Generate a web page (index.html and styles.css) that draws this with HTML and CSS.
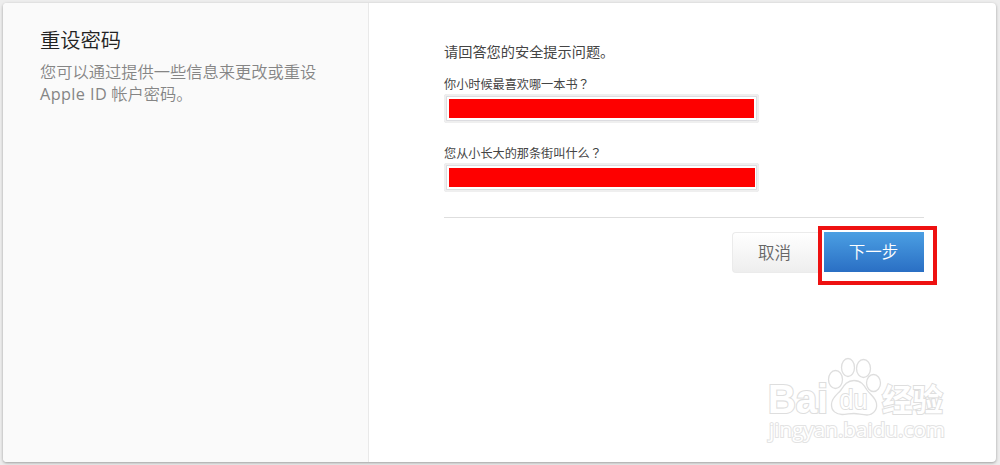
FILE: index.html
```html
<!DOCTYPE html>
<html lang="zh-CN">
<head>
  <meta charset="UTF-8">
  <title>重设密码</title>
  <link rel="stylesheet" href="styles.css">
</head>
<body>
  <div class="panel">
    <aside class="sidebar">
      <h1>重设密码</h1>
      <p>您可以通过提供一些信息来更改或重设<br><span class="latin">Apple ID</span> 帐户密码。</p>
    </aside>

    <main class="content">
      <p class="intro">请回答您的安全提示问题。</p>

      <div class="form-group">
        <label>你小时候最喜欢哪一本书<span lang="zh-TW" class="mark">？</span></label>
        <div class="field"><div class="mask"></div></div>
      </div>

      <div class="form-group">
        <label>您从小长大的那条街叫什么<span lang="zh-TW" class="mark">？</span></label>
        <div class="field"><div class="mask mask-wide"></div></div>
      </div>

      <div class="actions">
        <button class="btn-cancel">取消</button>
        <div class="highlight">
          <button class="btn-next">下一步</button>
        </div>
      </div>
    </main>
  </div>

  <svg class="watermark" width="190" height="95" viewBox="0 0 190 95">
    <g class="paw">
      <ellipse cx="75.500" cy="24.500" rx="7" ry="9"/>
      <ellipse cx="88" cy="12.500" rx="6.500" ry="9"/>
      <ellipse cx="103.500" cy="13.500" rx="7" ry="9"/>
      <ellipse cx="113.500" cy="28" rx="7" ry="8.500"/>
      <path d="M94 25.500c-7 0-10 5-13 9.500-3 4-9 7-9.500 14-.5 7 5 10.500 10.500 10.500 4.500 0 8-1 12-1s8 1.500 13 1.500c6 0 10.500-5 9.500-11.500-1-6-6-8.500-9.500-13.500-3-5-6-9.500-13-9.500z"/>
    </g>
    <text class="logo" x="8" y="58" textLength="60" lengthAdjust="spacingAndGlyphs">Bai</text>
    <text class="du" x="79.500" y="54" textLength="28" lengthAdjust="spacingAndGlyphs">du</text>
    <text class="logo-cn" x="122" y="55.500" textLength="61" lengthAdjust="spacingAndGlyphs">经验</text>
    <text class="url" x="9" y="82" textLength="176" lengthAdjust="spacingAndGlyphs">jingyan.baidu.com</text>
  </svg>
</body>
</html>
```

FILE: styles.css
```css
* {
  margin: 0;
  padding: 0;
  box-sizing: border-box;
}

body {
  height: 465px;
  padding: 3px 4px 3px 3px;
  overflow: hidden;
  background: #ededed;
  color: #444;
  font-family: "Open Sans", "Noto Sans CJK SC", sans-serif;
}

.panel {
  display: flex;
  height: 459px;
  background: #fff;
  border-radius: 4px;
  box-shadow: 0 1px 3px rgba(0,0,0,0.35);
}

.sidebar {
  width: 366px;
  padding: 23px 0 0 37px;
  background: #fafafa;
  border-right: 1px solid #e9e9e9;
  border-radius: 4px 0 0 4px;
}
.sidebar h1 {
  font-size: 20.3px;
  font-weight: 350;
  line-height: 28px;
  color: #222;
}
.sidebar p {
  margin-top: 7px;
  font-size: 16.25px;
  font-weight: 350;
  line-height: 22px;
  white-space: nowrap;
  color: #858585;
}
.latin {
  font-weight: 400;
  letter-spacing: 0.4px;
}

.content {
  width: 555px;
  padding: 38px 0 0 75px;
}
.intro {
  font-size: 14.2px;
  line-height: 22px;
}

.form-group {
  height: 69px;
  padding-top: 11px;
}
label {
  display: block;
  font-size: 12.15px;
  line-height: 20px;
}
.mark {
  font-family: "Noto Sans CJK TC", sans-serif;
}
.field {
  width: 315px;
  height: 29px;
  padding: 5px;
  margin-top: -1px;
  background: #fff;
  border-radius: 3px;
  box-shadow: inset 0 0 0 2px #efefef, inset 0 0 0 3px #dcdce0;
}
.mask {
  width: 305px;
  height: 19px;
  background: #fe0000;
}
.mask-wide {
  width: 306px;
}

.actions {
  display: flex;
  justify-content: flex-end;
  width: 493px;
  margin-top: 16px;
  background: linear-gradient(#dedede, #dedede) no-repeat;
  background-size: 480px 1px;
  padding-top: 9px;
}
button {
  border: none;
  font-family: inherit;
  font-size: 16.5px;
  font-weight: 350;
  line-height: 38px;
}
.btn-cancel {
  width: 86px;
  height: 41px;
  margin-top: 6px;
  padding-right: 2px;
  color: #666;
  background: linear-gradient(#fff, #eee);
  border: 1px solid #ebebeb;
  border-right: none;
  border-radius: 4px 0 0 4px;
}
.highlight {
  width: 119px;
  height: 59px;
  padding: 2px;
  border: 4px solid #ee1111;
}
.btn-next {
  display: block;
  width: 100px;
  height: 40px;
  padding-right: 1px;
  line-height: 40px;
  color: #fff;
  background: linear-gradient(#4b9fe3, #2a6fc4);
}

/* watermark over the panel corner */
.watermark {
  position: absolute;
  left: 760px;
  top: 355px;
  fill: #fff;
  stroke: #dedede;
  stroke-width: 1.3;
}
.logo {
  font: bold 40px "Liberation Sans", sans-serif;
  stroke-width: 2.2;
  paint-order: stroke;
}
.du {
  font: 27px "Liberation Sans", sans-serif;
  stroke-width: 1.8;
  paint-order: stroke;
}
.logo-cn {
  font: bold 31px "Noto Sans CJK SC", sans-serif;
  stroke-width: 2;
  paint-order: stroke;
}
.url {
  font: 20px "Open Sans", sans-serif;
  stroke: #e3e3e3;
  stroke-width: 2;
  paint-order: stroke;
}
```
